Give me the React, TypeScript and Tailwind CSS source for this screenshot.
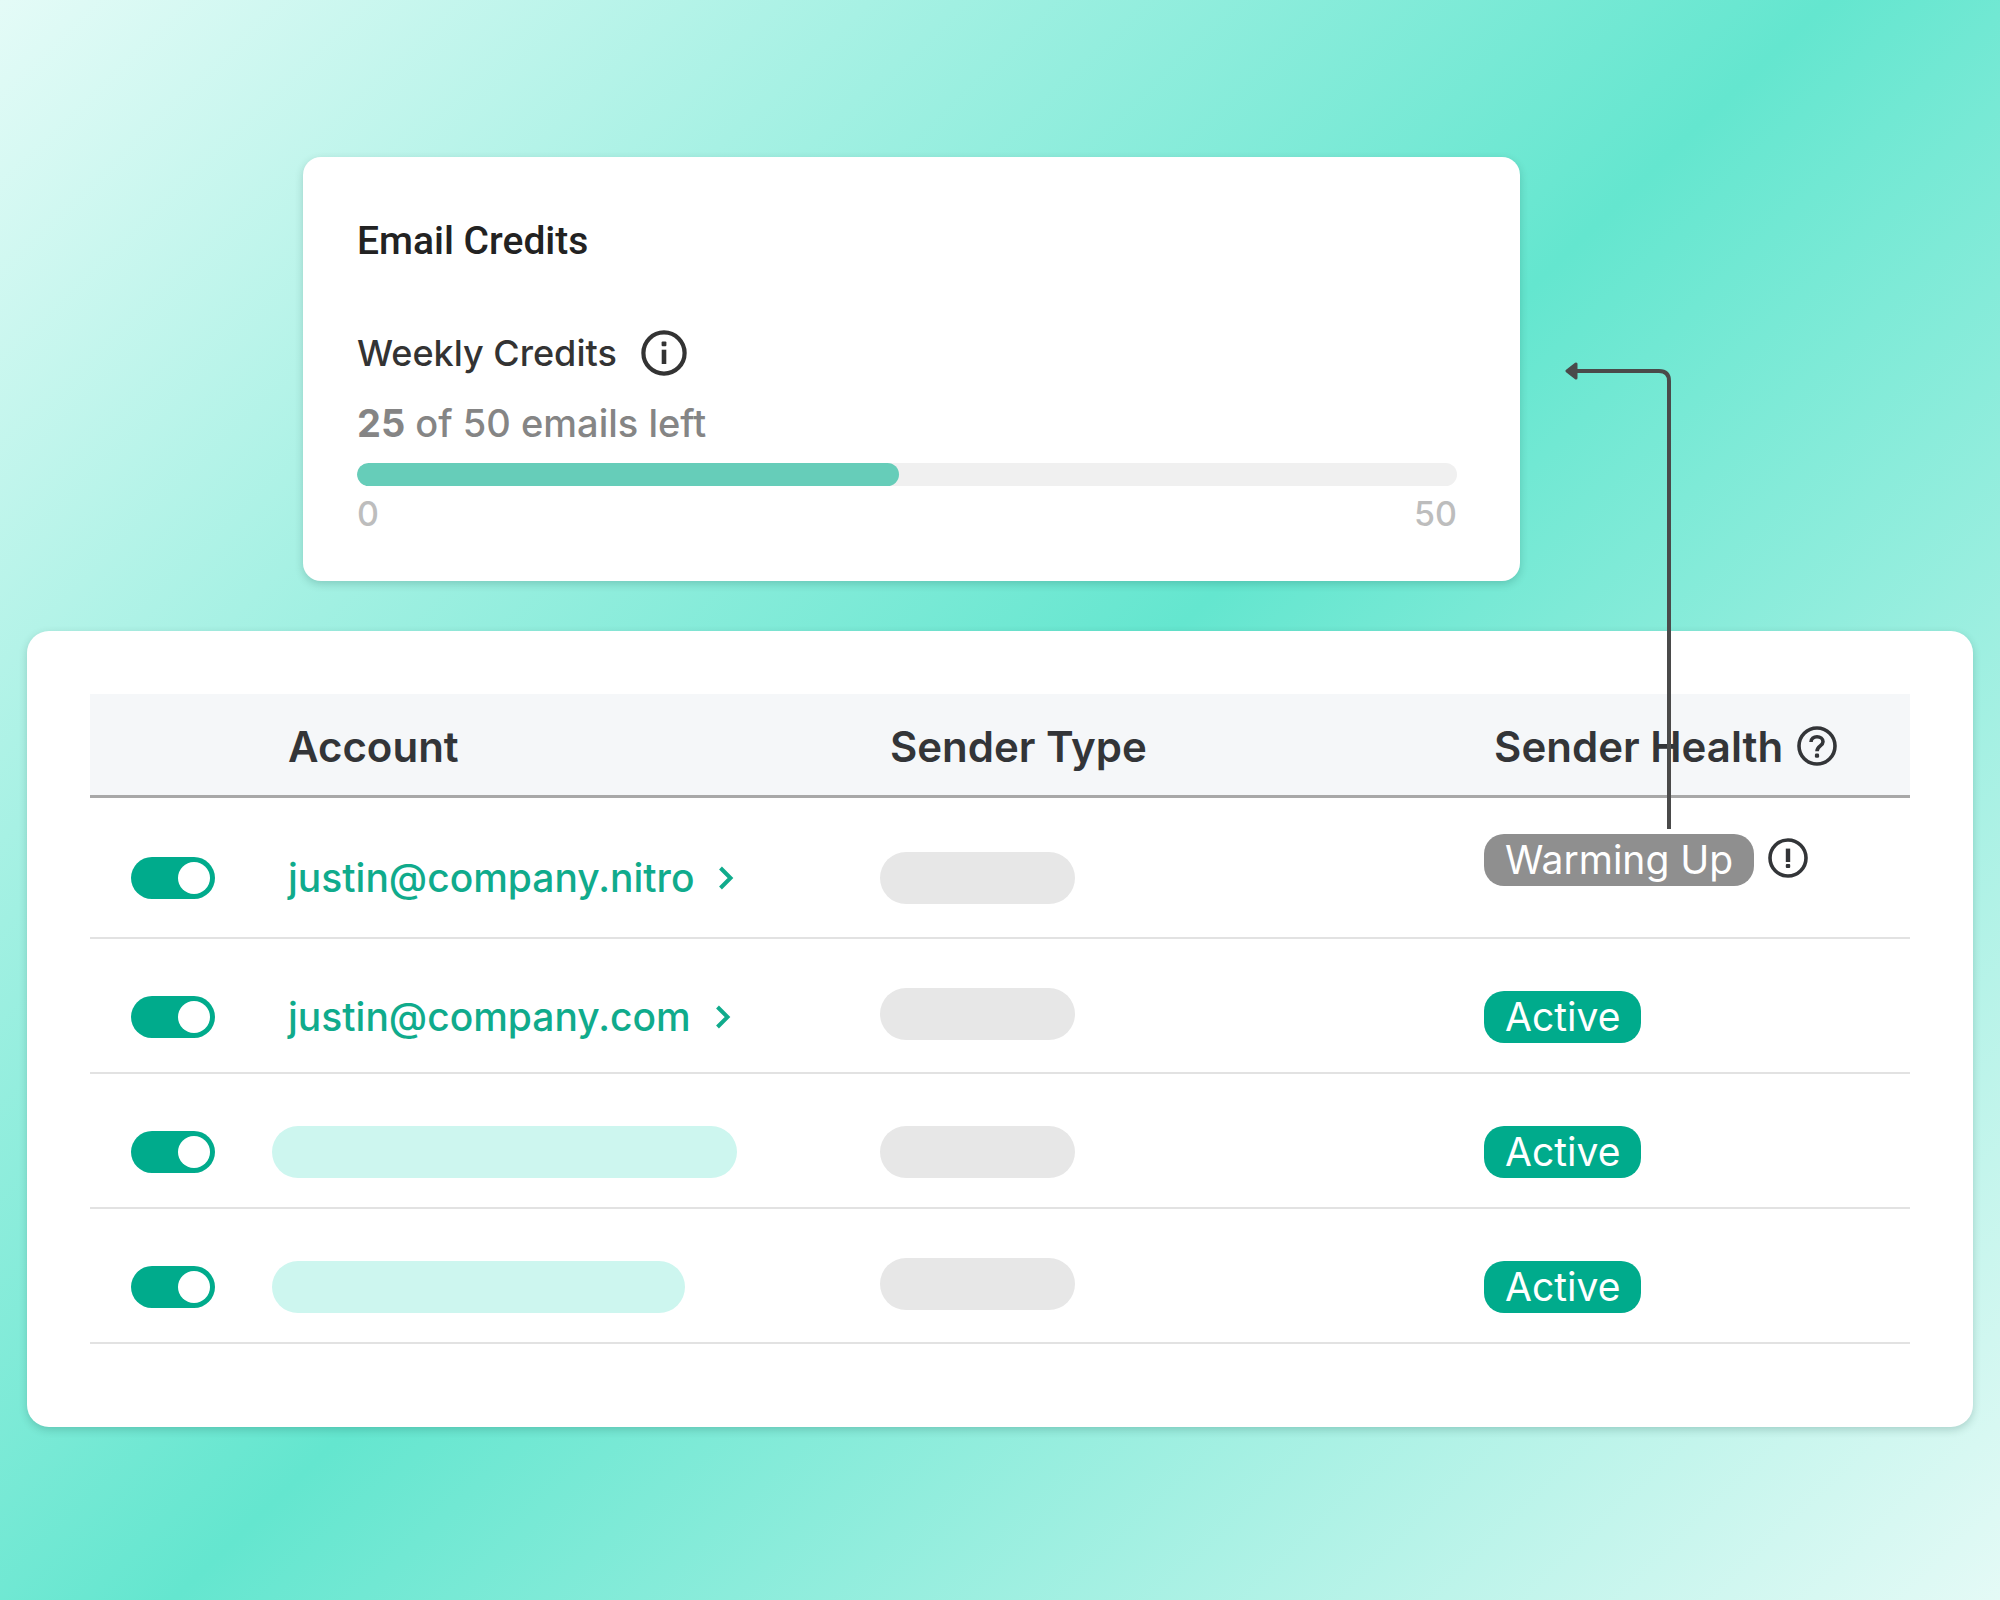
import { useState } from 'react';

interface Sender {
  id: string;
  email?: string;
  placeholder?: string;
  status: 'Warming Up' | 'Active';
}

const senders: Sender[] = [
  { id: 'nitro', email: 'justin@company.nitro', status: 'Warming Up' },
  { id: 'com', email: 'justin@company.com', status: 'Active' },
  { id: 'third', placeholder: 'w-[465px]', status: 'Active' },
  { id: 'fourth', placeholder: 'w-[413px]', status: 'Active' },
];

function InfoIcon() {
  return (
    <svg viewBox="0 0 46 46" className="size-[46px] shrink-0" fill="none" aria-hidden="true">
      <circle cx="23" cy="23" r="20.6" stroke="#333" strokeWidth="4.2" />
      <path d="M23 19.7V34" stroke="#333" strokeWidth="4.6" />
      <rect x="20.6" y="11.4" width="4.8" height="4.8" rx="1" fill="#333" />
    </svg>
  );
}

function HelpIcon() {
  return (
    <svg viewBox="0 0 40 40" className="size-10 shrink-0" fill="none" aria-hidden="true">
      <circle cx="20" cy="20" r="18" stroke="#333538" strokeWidth="3.6" />
      <path
        d="M14 16C14 12.7 16.7 10.7 20 10.7C23.3 10.7 26 12.8 26 15.8C26 19.8 20 20.2 20 25.2"
        stroke="#333538"
        strokeWidth="3.6"
      />
      <rect x="17.9" y="27.6" width="4.2" height="4.2" rx="1.4" fill="#333538" />
    </svg>
  );
}

function AlertIcon() {
  return (
    <svg viewBox="0 0 40 40" className="size-10 shrink-0" fill="none" aria-hidden="true">
      <circle cx="20" cy="20" r="18" stroke="#333538" strokeWidth="3.6" />
      <path d="M20 10.6V24" stroke="#333538" strokeWidth="4.4" />
      <rect x="17.8" y="26" width="4.4" height="4" rx="1" fill="#333538" />
    </svg>
  );
}

// Line from the warming badge up to the credits card
function Connector() {
  return (
    <svg
      viewBox="0 0 106 467"
      className="pointer-events-none absolute bottom-[calc(100%+5px)] right-[83px] h-[467px] w-[106px]"
      fill="none"
      aria-hidden="true"
    >
      <path d="M10 9H94Q104 9 104 19V467" stroke="#4a4a4a" strokeWidth="4" />
      <path d="M2 9L11 2V16Z" fill="#4a4a4a" stroke="#4a4a4a" strokeWidth="3" strokeLinejoin="round" />
    </svg>
  );
}

function Toggle({ label }: { label: string }) {
  const [on, setOn] = useState(true);

  return (
    <label className="relative block h-[42px] w-[84px] cursor-pointer">
      <input
        type="checkbox"
        role="switch"
        aria-label={label}
        checked={on}
        onChange={() => setOn(!on)}
        className="peer size-full cursor-pointer appearance-none rounded-full bg-gray-300 checked:bg-[#00ab8c]"
      />
      <span className="absolute left-[5px] top-[5px] size-8 rounded-full bg-white transition-transform peer-checked:translate-x-[42px]" />
    </label>
  );
}

function CreditsCard() {
  return (
    <section className="ml-[276px] mr-[453px] rounded-[18px] bg-white pb-[45px] pl-[54px] pr-[63px] pt-[60px] shadow-[0_3px_8px_rgba(0,60,50,0.2)]">
      <h2 className="font-['Roboto',sans-serif] text-[39px] font-medium leading-12 text-[#222]">Email Credits</h2>
      <div className="mt-16 flex items-center gap-6">
        <h3 className="text-[36px] font-medium leading-12 text-[#333]">Weekly Credits</h3>
        <InfoIcon />
      </div>
      <p className="mt-[22px] text-[38px] font-medium leading-12 text-[#858585]">
        <b className="font-bold">25</b> of 50 emails left
      </p>
      <div
        role="progressbar"
        aria-label="Weekly credits"
        aria-valuemin={0}
        aria-valuemax={50}
        aria-valuenow={25}
        className="mt-4 h-[23px] overflow-hidden rounded-full bg-[#f0f0f0]"
      >
        <div className="h-full w-[49.3%] rounded-full bg-[#66cdb9]" />
      </div>
      <div className="mt-[6px] flex justify-between text-[34px] font-medium leading-11 text-[#bdbdbd]">
        <span>0</span>
        <span>50</span>
      </div>
    </section>
  );
}

function SenderRow({ sender }: { sender: Sender }) {
  const warming = sender.status === 'Warming Up';

  return (
    <tr className="group h-[135px] border-b-2 border-[#e2e2e2] first:h-[142px]">
      <td className="pl-[41px] pt-[22px]">
        <Toggle label={`Enable ${sender.email ?? 'sender'}`} />
      </td>
      <td className="pt-[22px]">
        {sender.email ? (
          <a href="#" className="flex items-center gap-6 pl-4 text-[39px] font-medium leading-[52px] text-[#10ab8c]">
            {sender.email}
            <svg viewBox="0 0 16 24" className="h-6 w-4" fill="none" aria-hidden="true">
              <path d="M2.5 2L12.5 12L2.5 22" stroke="#10ab8c" strokeWidth="4" />
            </svg>
          </a>
        ) : (
          <div className={`h-[52px] rounded-full bg-[#cdf6ef] ${sender.placeholder}`} />
        )}
      </td>
      <td className="pt-[22px] group-even:pt-4">
        <div className="h-[52px] w-[195px] rounded-full bg-[#e7e7e7]" />
      </td>
      {warming ? (
        <td className="pt-9 align-top">
          <div className="flex items-start gap-[14px]">
            <span className="relative rounded-[20px] bg-[#8f8f8f] px-[21px] text-[39px] leading-[52px] text-white">
              {sender.status}
              <Connector />
            </span>
            <span className="pt-1">
              <AlertIcon />
            </span>
          </div>
        </td>
      ) : (
        <td className="pt-[22px]">
          <span className="block w-fit rounded-[20px] bg-[#00ab8c] px-[21px] text-[39px] leading-[52px] text-white">
            {sender.status}
          </span>
        </td>
      )}
    </tr>
  );
}

export default function App() {
  return (
    <main className="min-h-screen bg-[linear-gradient(136deg,#e4fbf7_0%,#64e6cf_50%,#e4faf6_100%)] px-[27px] pb-[172px] pt-[157px] font-['Inter',sans-serif]">
      <CreditsCard />

      <section className="mt-[50px] rounded-[22px] bg-white px-[63px] pb-[83px] pt-[63px] shadow-[0_3px_8px_rgba(0,60,50,0.2)]">
        <table className="w-full table-fixed border-collapse text-left">
          <thead className="bg-[#f5f7f9]">
            <tr className="h-[102px] border-b-3 border-[#a8a8a8] text-[42px] text-[#333538]">
              <th className="w-[10%]" aria-label="Enabled" />
              <th className="w-[33.4%] pl-4 pt-1 font-semibold">Account</th>
              <th className="w-[33.2%] pl-[10px] pt-1 font-semibold">Sender Type</th>
              <th className="pl-[10px] pt-1 font-semibold">
                <span className="flex items-center gap-[14px]">
                  Sender Health
                  <HelpIcon />
                </span>
              </th>
            </tr>
          </thead>
          <tbody>
            {senders.map((sender) => (
              <SenderRow key={sender.id} sender={sender} />
            ))}
          </tbody>
        </table>
      </section>
    </main>
  );
}
